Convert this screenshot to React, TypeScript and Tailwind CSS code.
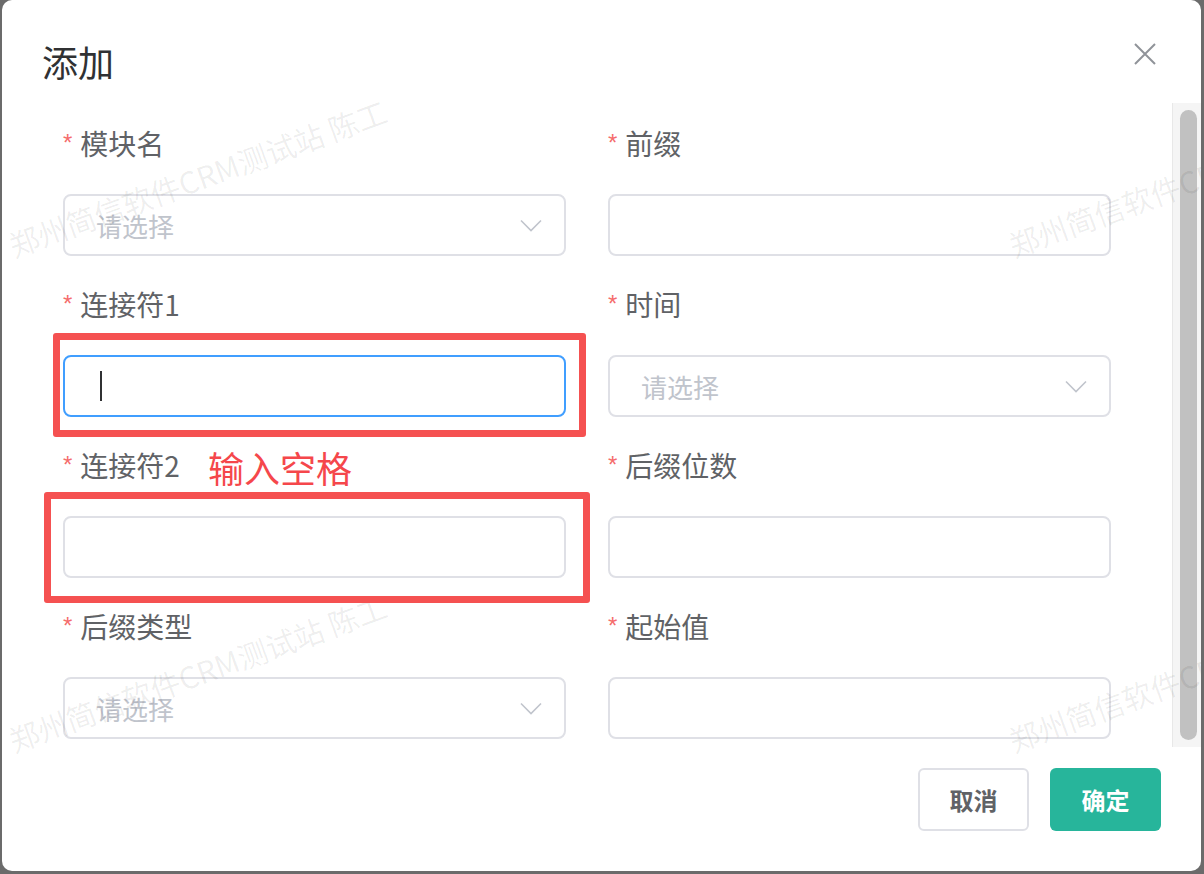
import React from "react";

const CJK = { fontFamily: '"Noto Sans CJK SC", "Noto Sans", sans-serif' };

const Chevron = () => (
  <svg width="22" height="13" viewBox="0 0 22 13" fill="none" className="mr-[22px]">
    <polyline points="1,1.5 11,11.5 21,1.5" stroke="#c0c4cc" strokeWidth="1.6" />
  </svg>
);

const Field = ({ label, children }: { label: string; children: React.ReactNode }) => (
  <div className="flex flex-col">
    <div className="h-[40px] flex items-center text-[28px] leading-[40px] text-[#606266]">
      <span className="text-[#f56c6c] text-[24px] mr-[8px]" style={{ fontFamily: '"Liberation Sans", sans-serif' }}>
        *
      </span>
      {label}
    </div>
    <div className="mt-[31px]">{children}</div>
  </div>
);

const TextInput = ({ focused }: { focused?: boolean }) => (
  <div
    className={
      "h-[62px] rounded-[8px] border-2 bg-white flex items-center px-[31px] " +
      (focused ? "border-[#409eff]" : "border-[#dfe0e6]")
    }
  >
    {focused && <div className="w-[2px] h-[30px] bg-[#303133] ml-[4px]" />}
  </div>
);

const SelectInput = () => (
  <div className="h-[62px] rounded-[8px] border-2 border-[#dfe0e6] bg-white flex items-center justify-between pl-[31px]">
    <span className="text-[26px] text-[#c0c4cc]">请选择</span>
    <Chevron />
  </div>
);

const Watermark = ({ x, y }: { x: number; y: number }) => (
  <div
    className="absolute pointer-events-none whitespace-nowrap text-[30px] leading-[30px] text-black/[0.07] origin-bottom-left rotate-[-20deg]"
    style={{ left: x, top: y }}
  >
    郑州简信软件CRM测试站 陈工
  </div>
);

export default function App() {
  return (
    <div className="w-[1204px] h-[874px] bg-[#6b6b6b] overflow-hidden" style={CJK}>
      <div className="ml-[2px] w-[1199px] h-[871px] bg-white rounded-[10px] relative overflow-hidden flex flex-col">
        {/* header */}
        <div className="h-[103px] shrink-0 flex items-start justify-between pl-[40px] pr-[45px]">
          <div className="mt-[39px] text-[36px] leading-[44px] text-[#303133]">添加</div>
          <svg width="22" height="22" viewBox="0 0 22 22" className="mt-[43px]">
            <path d="M1 1 L21 21 M21 1 L1 21" stroke="#909399" strokeWidth="2" />
          </svg>
        </div>

        {/* body */}
        <div className="h-[644px] shrink-0 flex">
          <div className="flex-1 pl-[61px] pt-[20px]">
            <div className="grid grid-cols-[503px_503px] gap-x-[42px] gap-y-[28px]">
              <Field label="模块名">
                <SelectInput />
              </Field>
              <Field label="前缀">
                <TextInput />
              </Field>
              <Field label="连接符1">
                <TextInput focused />
              </Field>
              <Field label="时间">
                <SelectInput />
              </Field>
              <Field label="连接符2">
                <TextInput />
              </Field>
              <Field label="后缀位数">
                <TextInput />
              </Field>
              <Field label="后缀类型">
                <SelectInput />
              </Field>
              <Field label="起始值">
                <TextInput />
              </Field>
            </div>
          </div>
          <div className="w-[29px] shrink-0 bg-[#f5f5f5] border-l border-[#e8e8e8] pl-[7px] pr-[4px] py-[7px]">
            <div className="h-full rounded-full bg-[#c1c1c1]" />
          </div>
        </div>

        {/* footer */}
        <div className="flex justify-end gap-[21px] pr-[40px] pt-[21px]">
          <button className="w-[111px] h-[63px] rounded-[6px] border-2 border-[#dfe0e6] bg-white text-[24px] font-bold text-[#606266]">
            取消
          </button>
          <button className="w-[111px] h-[63px] rounded-[6px] bg-[#27b59b] text-[24px] font-bold text-white">
            确定
          </button>
        </div>

        {/* watermark layer */}
        <Watermark x={13} y={230} />
        <Watermark x={1013} y={230} />
        <Watermark x={13} y={725} />
        <Watermark x={1013} y={725} />

        {/* annotations */}
        <div className="absolute left-[51px] top-[333px] w-[533px] h-[104px] border-[7px] border-[#f55151] rounded-[3px] pointer-events-none" />
        <div className="absolute left-[42px] top-[492px] w-[546px] h-[111px] border-[7px] border-[#f55151] rounded-[3px] pointer-events-none" />
        <div className="absolute left-[206px] top-[449px] text-[36px] leading-[36px] text-[#f5474b]">输入空格</div>
      </div>
    </div>
  );
}
